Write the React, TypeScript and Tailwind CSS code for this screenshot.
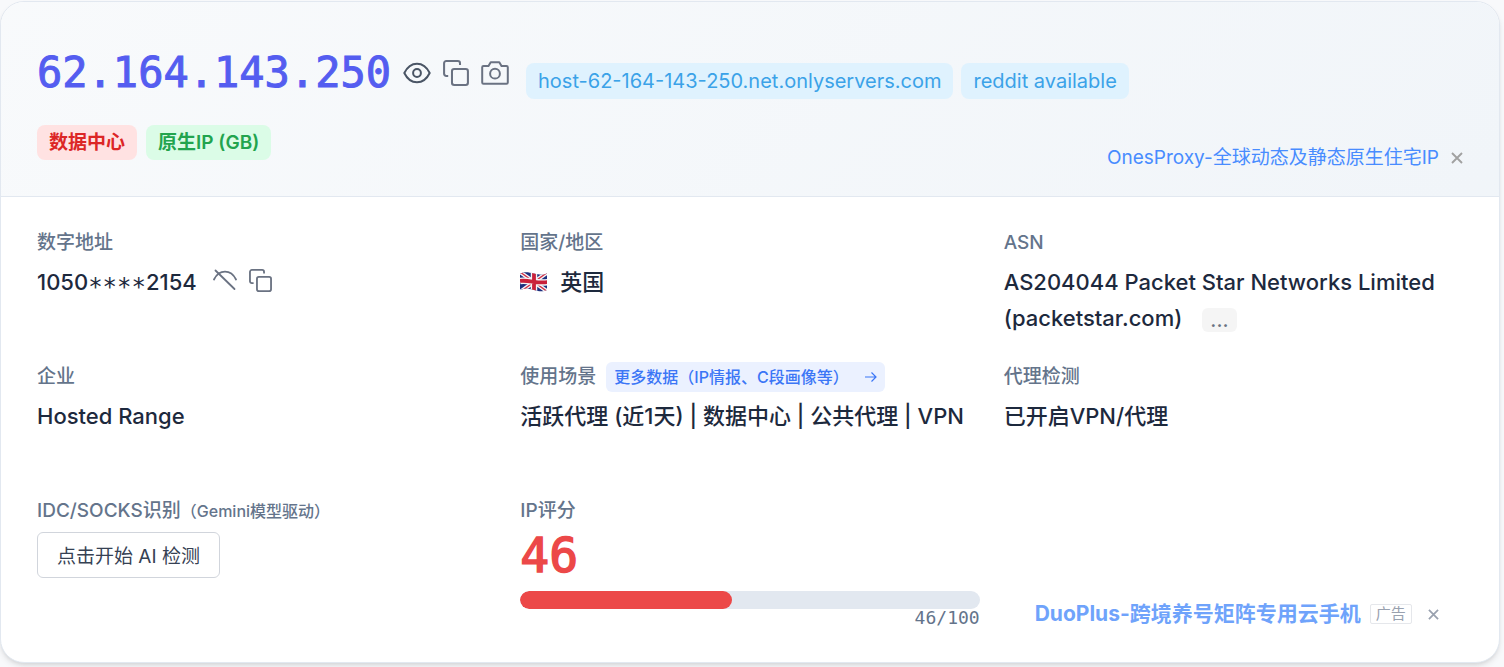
import type { ReactNode } from "react";

const score = 46;

function CopyIcon({ className }: { className: string }) {
  return (
    <svg viewBox="0 0 24 24" fill="none" stroke="currentColor" strokeWidth="1.9" className={className} aria-hidden="true">
      <rect x="8.300" y="8.300" width="14.700" height="14.700" rx="2" />
      <path d="M4.800 14.700H3A2 2 0 0 1 1 12.700V3a2 2 0 0 1 2-2h10.700a2 2 0 0 1 2 2v1.700" />
    </svg>
  );
}

function EyeIcon() {
  return (
    <svg viewBox="0 0 28 22" fill="none" stroke="currentColor" strokeWidth="2" className="h-[22px] w-7" aria-hidden="true">
      <path d="M1.300 11C4.500 4.500 9 1.700 14 1.700S23.500 4.500 26.700 11c-3.200 6.500-7.700 9.300-12.700 9.300S4.500 17.500 1.300 11Z" strokeLinejoin="round" />
      <circle cx="14" cy="11" r="3.900" />
    </svg>
  );
}

function CameraIcon() {
  return (
    <svg viewBox="0 0 28 24" fill="none" stroke="currentColor" strokeWidth="2" className="h-6 w-7" aria-hidden="true">
      <path d="M1.200 6.300A1.300 1.300 0 0 1 2.500 5H7.500L9.700 1.200h8.600L20.500 5h5a1.300 1.300 0 0 1 1.300 1.300v15.200a1.300 1.300 0 0 1-1.300 1.300h-23a1.300 1.300 0 0 1-1.300-1.300Z" strokeLinejoin="round" />
      <circle cx="14" cy="12.700" r="4.900" />
    </svg>
  );
}

function EyeClosedIcon() {
  return (
    <svg viewBox="0 0 24 22" fill="none" stroke="currentColor" strokeWidth="1.800" strokeLinecap="round" className="h-[22px] w-6" aria-hidden="true">
      <path d="M1 10.500C3.500 5.500 7.500 2.700 12 2.700s8.500 2.800 11 7.800" />
      <path d="M2.500 1.500l19 18.500" />
    </svg>
  );
}

function Flag() {
  return (
    <svg viewBox="0 0 28 20" className="h-5 w-7" role="img" aria-label="GB">
      <defs>
        <clipPath id="flag">
          <path d="M0 1.500C5-.8 9 .3 14 1.500s8 2 13 0V18c-5 2.300-8 1.200-13 0s-9-2-14 0Z" />
        </clipPath>
      </defs>
      <g clipPath="url(#flag)">
        <rect width="28" height="20" fill="#1c2f7e" />
        <path d="M0 0L28 20M28 0L0 20" stroke="#f4f4f6" strokeWidth="4" />
        <path d="M0 0L28 20M28 0L0 20" stroke="#d32f45" strokeWidth="1.400" />
        <path d="M14 0V20M0 9C8 7.500 18 12 28 10" stroke="#f4f4f6" strokeWidth="6.500" fill="none" />
        <path d="M14 0V20M0 9C8 7.500 18 12 28 10" stroke="#c9203a" strokeWidth="3.800" fill="none" />
      </g>
    </svg>
  );
}

function Cross({ className }: { className: string }) {
  return (
    <svg viewBox="0 0 12 12" fill="none" stroke="currentColor" strokeWidth="1.900" className={className} aria-hidden="true">
      <path d="M1 1l10 10M11 1L1 11" />
    </svg>
  );
}

function Field({ label, extra, children }: { label: string; extra?: ReactNode; children: ReactNode }) {
  return (
    <section>
      <h2 className="flex h-7 items-center text-[19px] font-medium whitespace-nowrap text-[#64748b]">
        {label}
        {extra}
      </h2>
      <div className="mt-[7px] text-[22px] leading-9 font-medium text-slate-800">{children}</div>
    </section>
  );
}

export default function App() {
  return (
    <main className="bg-[#f8f9fb] pt-px pr-1 pb-6 font-['Inter','Noto_Sans_CJK_SC',sans-serif]">
      <article className="overflow-hidden rounded-3xl border border-[#e2e8f0] bg-white shadow-md">
        <header className="border-b border-[#e2e8f0] bg-linear-135 from-slate-50 to-slate-100 px-9 pt-[45px] pb-6">
          <div className="flex items-center">
            <h1 className="font-['DejaVu_Sans_Mono',monospace] text-[42px] leading-[52px] font-normal text-[#545df0] [-webkit-text-stroke:1px_#545df0]">62.164.143.250</h1>
            <div className="ml-3 flex items-center gap-3 text-gray-500">
              <button type="button" aria-label="隐藏" className="text-gray-600"><EyeIcon /></button>
              <button type="button" aria-label="复制"><CopyIcon className="size-[26px]" /></button>
              <button type="button" aria-label="截图"><CameraIcon /></button>
            </div>
            <div className="mt-4 ml-[17px] flex gap-2 text-[20px] leading-9 whitespace-nowrap text-[#3ba2e8]">
              <span className="rounded-lg bg-sky-100 px-3">host-62-164-143-250.net.onlyservers.com</span>
              <span className="rounded-lg bg-sky-100 px-3">reddit available</span>
            </div>
          </div>
          <div className="mt-[26px] flex items-start justify-between">
            <div className="flex gap-[9px] text-[19px] leading-[35px] font-semibold">
              <span className="rounded-lg bg-red-100 px-3 text-[#dc2626]">数据中心</span>
              <span className="rounded-lg bg-green-100 px-3 text-[#22a44e]">原生IP (GB)</span>
            </div>
            <div className="flex items-center gap-3 pt-[19px] whitespace-nowrap">
              <a href="#" className="text-[19px] leading-7 text-[#488cff]">OnesProxy-全球动态及静态原生住宅IP</a>
              <button type="button" aria-label="关闭" className="text-neutral-400"><Cross className="size-3" /></button>
            </div>
          </div>
        </header>

        <div className="grid auto-rows-[minmax(108px,auto)] grid-cols-3 gap-x-6 gap-y-[26px] px-9 pt-8 pb-9">
          <Field label="数字地址">
            <div className="flex items-center">
              <span>
                1050
                <span className="align-sub font-['DejaVu_Sans_Mono',monospace] text-[24px] leading-none font-normal">****</span>
                2154
              </span>
              <div className="mb-1 ml-4 flex items-center gap-3 text-gray-500">
                <button type="button" aria-label="显示"><EyeClosedIcon /></button>
                <button type="button" aria-label="复制"><CopyIcon className="size-[23px]" /></button>
              </div>
            </div>
          </Field>
          <Field label="国家/地区">
            <div className="flex items-center gap-3"><Flag />英国</div>
          </Field>
          <Field label="ASN">
            AS204044 Packet Star Networks Limited{" "}
            <span className="inline-flex items-center gap-5 align-top">
              <span>(packetstar.com)</span>
              <button type="button" aria-label="更多" className="mt-1 h-6 rounded-md bg-neutral-100 px-2 text-[20px] leading-6 text-gray-500">...</button>
            </span>
          </Field>

          <Field label="企业">Hosted Range</Field>
          <Field
            label="使用场景"
            extra={
              <a href="#" className="ml-[10px] flex h-[30px] items-center gap-4 rounded-md bg-[#ebf1ff] px-2 text-[16px] text-[#3b76f6]">
                更多数据（IP情报、C段画像等）
                <svg viewBox="0 0 12 12" fill="none" stroke="currentColor" strokeWidth="1.200" className="size-3" aria-hidden="true">
                  <path d="M0 6h11M6.500 1.500L11 6l-4.500 4.500" />
                </svg>
              </a>
            }
          >
            <span className="whitespace-nowrap">活跃代理 (近1天) | 数据中心 | 公共代理 | VPN</span>
          </Field>
          <Field label="代理检测">已开启VPN/代理</Field>

          <Field label="IDC/SOCKS识别" extra={<span className="text-[16px]">（Gemini模型驱动）</span>}>
            <button type="button" className="block h-[46px] rounded-md border border-gray-300 bg-white px-[19px] pt-[3px] text-[19px] font-normal text-gray-700">点击开始 AI 检测</button>
          </Field>
          <Field label="IP评分">
            <div className="font-['DejaVu_Sans_Mono',monospace]">
              <strong className="block text-[48px] leading-[46px] font-normal text-[#ec4848] [-webkit-text-stroke:1.5px_#ec4848]">{score}</strong>
              <div className="mt-[13px] h-[18px] overflow-hidden rounded-full bg-[#e2e8f0]">
                <div className="h-full rounded-full bg-[#ec4848]" style={{ width: `${score}%` }} />
              </div>
              <div className="text-right text-[18px] leading-[17px] font-normal text-[#64748b]">{score}/100</div>
            </div>
          </Field>
          <aside className="flex items-center self-end pl-[31px] leading-6 whitespace-nowrap">
            <a href="#" className="text-[21px] font-bold text-[#6fa3fb]">DuoPlus-跨境养号矩阵专用云手机</a>
            <span className="ml-[9px] rounded-xs border border-gray-200 px-[5px] text-[15px] leading-[18px] text-gray-400">广告</span>
            <button type="button" aria-label="关闭" className="ml-4 text-gray-400"><Cross className="size-[11px]" /></button>
          </aside>
        </div>
      </article>
    </main>
  );
}
